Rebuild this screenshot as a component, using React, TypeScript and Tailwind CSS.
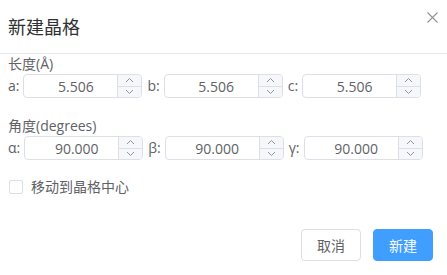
import React from "react";

const font = "font-['Open_Sans','Noto_Sans_CJK_SC',sans-serif]";

function Chevron({ up }: { up?: boolean }) {
  return (
    <svg width="9" height="6" viewBox="0 0 9 6" fill="none" stroke="#909399" strokeWidth="1">
      {up ? <path d="M1 5 L4.5 1.5 L8 5" /> : <path d="M1 1 L4.5 4.5 L8 1" />}
    </svg>
  );
}

function NumberField({ label, value }: { label: string; value: string }) {
  return (
    <div className="flex items-center gap-[4px]">
      <span className="text-[14px] leading-5 text-[#606266]">{label}</span>
      <div className="flex h-[24px] w-[119px] overflow-hidden rounded-[4px] border border-[#dcdfe6] bg-white">
        <div className="flex flex-1 items-center justify-center pl-[10px] text-[14px] text-[#606266]">{value}</div>
        <div className="flex w-[24px] flex-col border-l border-[#dcdfe6] bg-[#f5f7fa]">
          <div className="flex flex-1 items-center justify-center border-b border-[#dcdfe6]">
            <Chevron up />
          </div>
          <div className="flex flex-1 items-center justify-center">
            <Chevron />
          </div>
        </div>
      </div>
    </div>
  );
}

export default function App() {
  return (
    <div className={`relative h-[275px] w-[447px] bg-white ${font}`}>
      <div className="h-[54px] border-b border-[#e4e7ed] px-2 pt-[15px]">
        <h1 className="text-[18px] leading-[24px] text-[#303133]">新建晶格</h1>
      </div>
      <button className="absolute right-[9px] top-[12px]">
        <svg width="11" height="11" viewBox="0 0 11 11" stroke="#909399" strokeWidth="1.1">
          <path d="M0.5 0.5 L10.5 10.5 M10.5 0.5 L0.5 10.5" />
        </svg>
      </button>

      <div className="px-2">
        <div className="text-[14px] leading-5 text-[#606266]">长度(Å)</div>
        <div className="flex gap-[5px]">
          <NumberField label="a:" value="5.506" />
          <NumberField label="b:" value="5.506" />
          <NumberField label="c:" value="5.506" />
        </div>

        <div className="mt-[18px] text-[14px] leading-5 text-[#606266]">角度(degrees)</div>
        <div className="flex gap-[5px]">
          <NumberField label="α:" value="90.000" />
          <NumberField label="β:" value="90.000" />
          <NumberField label="γ:" value="90.000" />
        </div>

        <label className="mt-[17px] flex items-center gap-[8px] pl-[1px]">
          <span className="h-[14px] w-[14px] rounded-[2px] border border-[#dcdfe6] bg-white" />
          <span className="text-[14px] leading-5 text-[#606266]">移动到晶格中心</span>
        </label>
      </div>

      <div className="mt-[32px] flex justify-end gap-[12px] pr-[14px]">
        <button className="h-[32px] w-[60px] rounded-[4px] border border-[#dcdfe6] bg-white text-[14px] text-[#606266]">取消</button>
        <button className="h-[32px] w-[60px] rounded-[4px] border border-[#409eff] bg-[#409eff] text-[14px] text-white">新建</button>
      </div>
    </div>
  );
}
